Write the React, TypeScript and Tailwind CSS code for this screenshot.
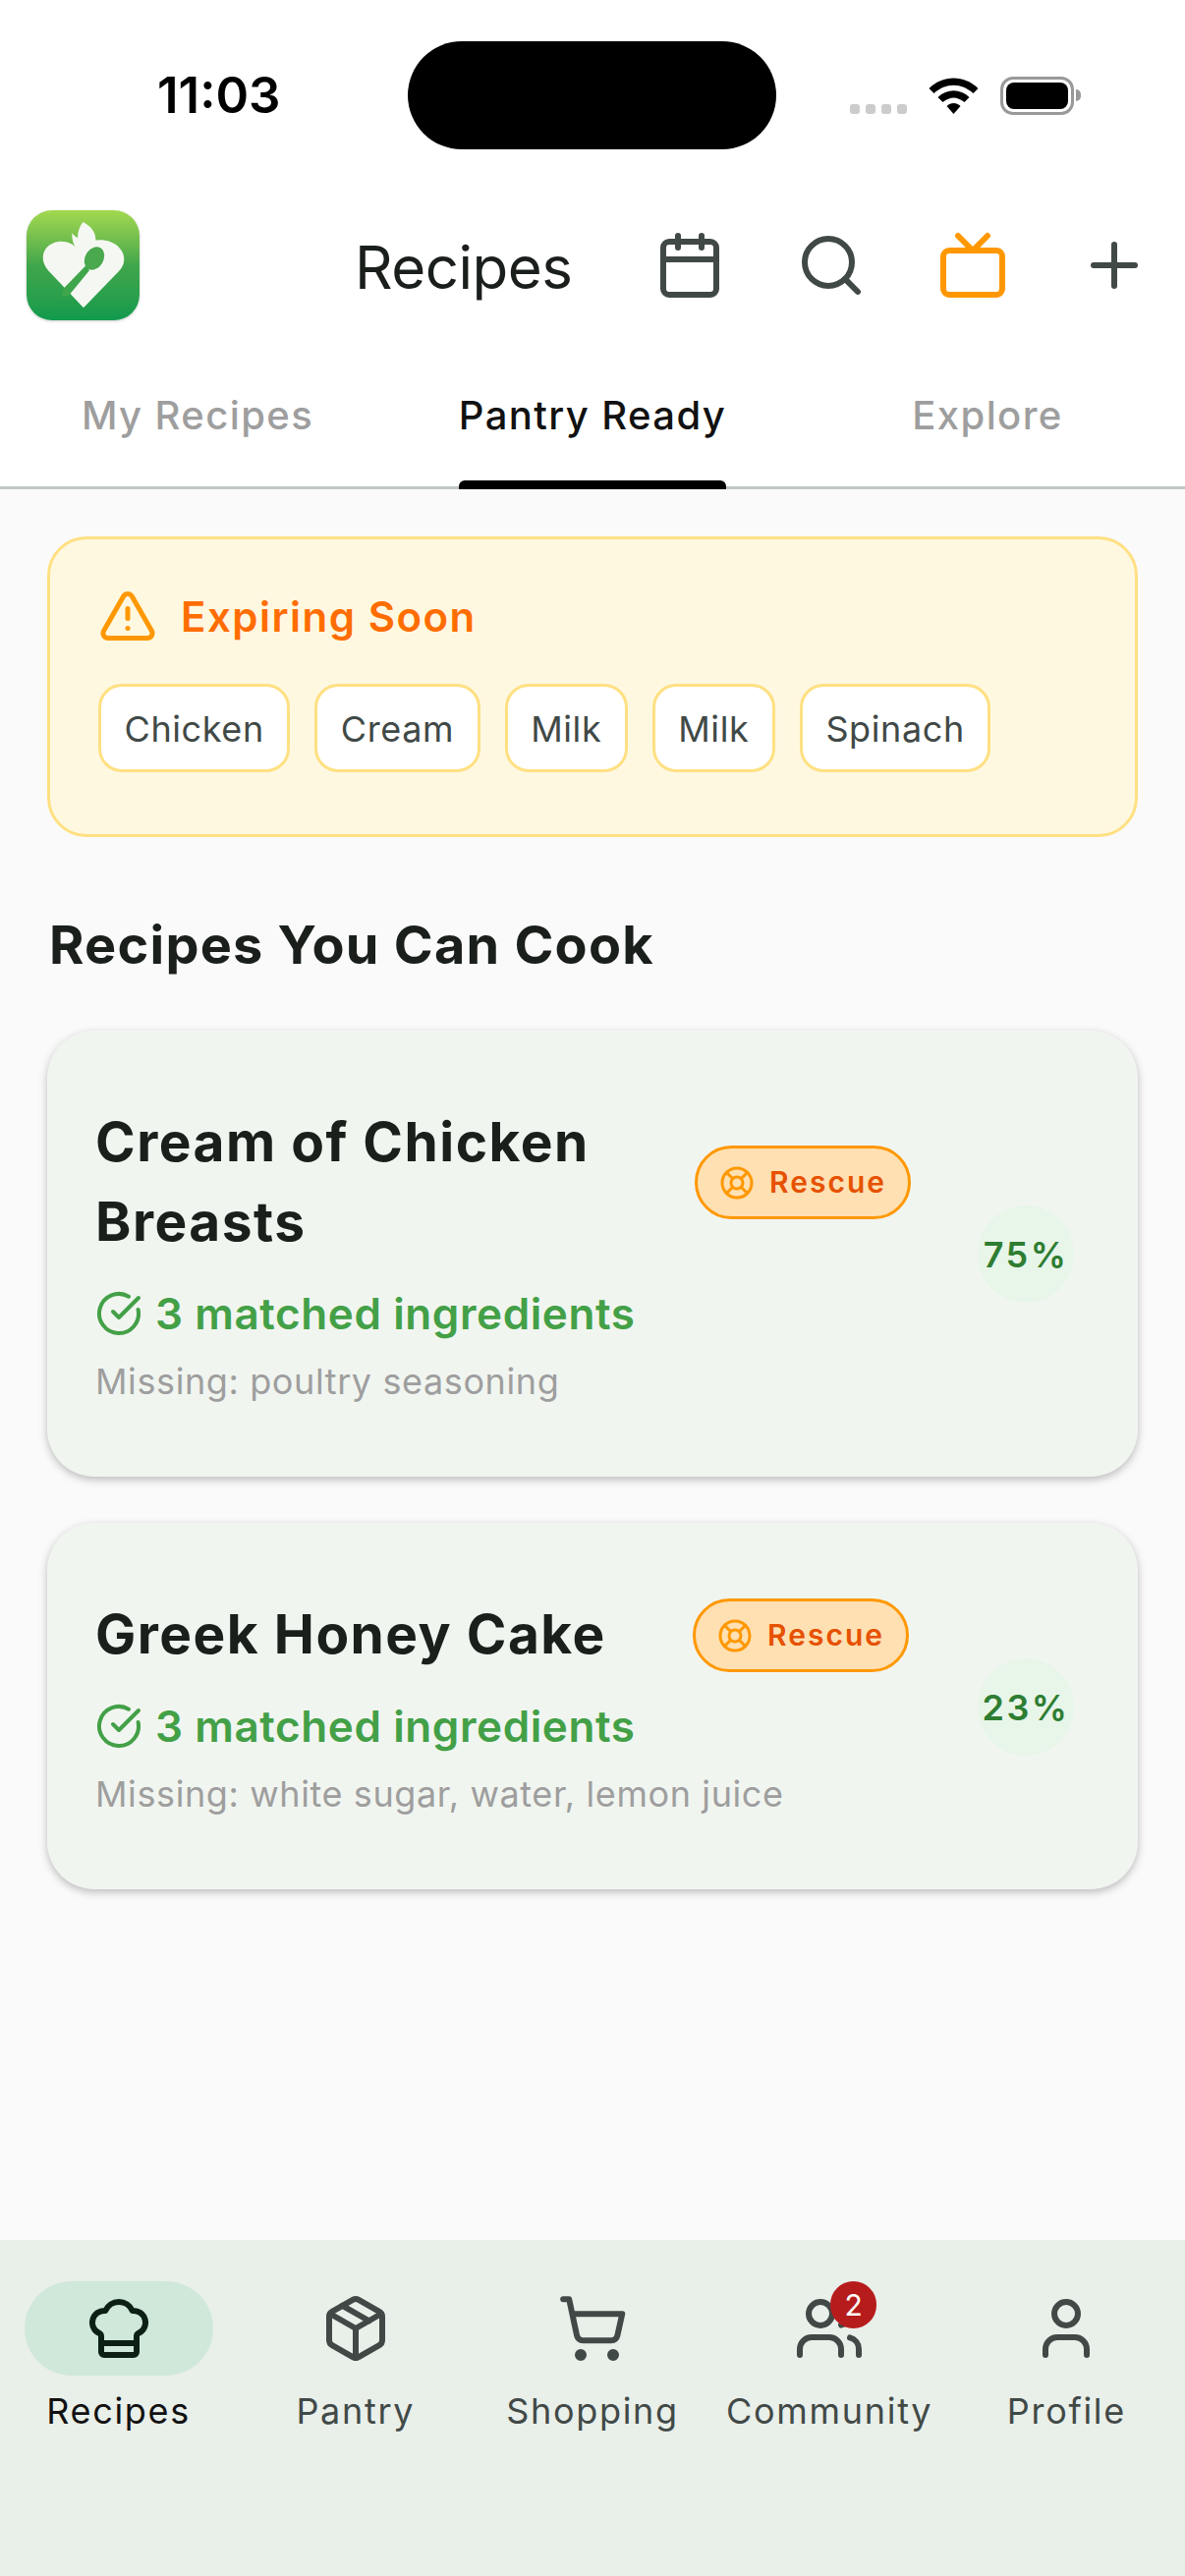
import { Calendar, Search, Tv, Plus, TriangleAlert, LifeBuoy, CircleCheckBig, ChefHat, Package, ShoppingCart, Users, User } from 'lucide-react'

const font = { fontFamily: 'Inter, "Noto Sans", sans-serif' }

const StatusBar = () => (
  <div className="h-[152px] flex items-center relative shrink-0">
    <div className="absolute left-[160px] top-[69px] text-[51px] leading-[56px] font-semibold text-black">11:03</div>
    <div className="absolute left-[415px] top-[42px] w-[375px] h-[110px] rounded-[55px] bg-black" />
    <div className="absolute left-[865px] top-[106px] flex gap-[6px]">
      <div className="w-[10px] h-[10px] rounded-[3px] bg-[#cccccc]" />
      <div className="w-[10px] h-[10px] rounded-[3px] bg-[#cccccc]" />
      <div className="w-[10px] h-[10px] rounded-[3px] bg-[#cccccc]" />
      <div className="w-[10px] h-[10px] rounded-[3px] bg-[#cccccc]" />
    </div>
    <svg className="absolute left-[945px] top-[79px]" width="51" height="38" viewBox="0 0 50 38">
      <path d="M0 11 C14 -3 36 -3 50 11 L45 16 C33 5 17 5 5 16 Z" fill="#000" />
      <path d="M9 20 C18 11 32 11 41 20 L36 25 C28 19 22 19 14 25 Z" fill="#000" />
      <path d="M18 29 C22 25 28 25 32 29 L25 37 Z" fill="#000" />
    </svg>
    <div className="absolute left-[1018px] top-[78px] w-[75px] h-[39px] rounded-[13px] border-[3px] border-[#999999] p-[3px]">
      <div className="w-full h-full rounded-[8px] bg-black" />
    </div>
    <div className="absolute left-[1095px] top-[91px] w-[5px] h-[12px] rounded-r-[5px] bg-[#999999]" />
  </div>
)

// drawn on a 3x grid so the points can be read straight off the crop
const Logo = () => (
  <div className="w-[115px] h-[112px] rounded-[26px] bg-gradient-to-b from-[#a3d94f] via-[#3fa64b] to-[#0f9a4d] shadow-[0_1px_3px_rgba(0,0,0,0.2)]">
    <svg width="115" height="112" viewBox="0 0 345 336">
      <path d="M174 298 L66 184 C36 150 50 104 96 96 C120 92 142 102 154 116 C172 98 200 88 240 92 C292 100 316 152 282 186 Z" fill="#f5f8f2" />
      <path d="M152 116 C142 104 138 88 139 69 C146 78 150 82 156 84 C156 66 162 50 172 36 C196 48 214 68 211 96 L170 116 Z" fill="#f5f8f2" />
      <path d="M108 264 L128 262 L192 184 L182 168 L112 240 Z" fill="#3fa64b" />
      <ellipse cx="207" cy="147" rx="28" ry="37" transform="rotate(30 207 147)" fill="#4aa84e" />
    </svg>
  </div>
)

const Header = () => (
  <div className="flex items-center h-[112px] pl-[27px] mt-[62px] shrink-0">
    <Logo />
    <div className="ml-[219px] text-[60px] leading-[72px] text-[#1a1f1c] tracking-[-0.5px] mt-[4px]">Recipes</div>
    <div className="ml-[84px] flex gap-[72px] text-[#414947]">
      <Calendar size={72} strokeWidth={2} />
      <Search size={72} strokeWidth={2} />
      <Tv className="text-[#ff9800]" size={72} strokeWidth={2} />
      <Plus size={72} strokeWidth={2} />
    </div>
  </div>
)

const Tabs = () => (
  <div className="grid grid-cols-3 h-[134px] mt-[38px] border-b-[3px] border-[#c1c8c2] shrink-0">
    <div className="flex justify-center items-center text-[40px] tracking-[1.4px] font-medium text-[#9e9e9e] pb-[14px]">My Recipes</div>
    <div className="flex justify-center items-center text-[40px] tracking-[1.4px] font-medium text-[#111111] relative pb-[14px]">
      Pantry Ready
      <div className="absolute left-[65px] right-[65px] bottom-[-3px] h-[9px] rounded-t-[6px] bg-black" />
    </div>
    <div className="flex justify-center items-center text-[40px] tracking-[1.4px] font-medium text-[#9e9e9e] pb-[14px]">Explore</div>
  </div>
)

const Chip = ({ name }: { name: string }) => (
  <div className="h-[90px] px-[23.5px] pt-[2px] flex items-center rounded-[24px] border-[3px] border-[#ffe082] bg-white text-[36px] tracking-[0.6px] text-[#414947]">
    {name}
  </div>
)

const Expiring = () => (
  <div className="mx-[48px] mt-[48px] h-[306px] rounded-[40px] border-[3px] border-[#ffe082] bg-[#fff8e1] pt-[48px] pl-[49px]">
    <div className="flex items-center h-[60px]">
      <TriangleAlert className="text-[#ff9800]" size={60} strokeWidth={2} />
      <span className="ml-[24px] text-[42px] tracking-[1.5px] font-semibold text-[#ff6d00]">Expiring Soon</span>
    </div>
    <div className="flex gap-[25px] mt-[39px]">
      {['Chicken', 'Cream', 'Milk', 'Milk', 'Spinach'].map((name, index) => (
        <Chip key={index} name={name} />
      ))}
    </div>
  </div>
)

type RecipeProps = {
  title: string,
  percent: number,
  missing: string,
  height: string,
  badgeClass: string,
  circleClass: string,
}

const RecipeCard = ({ title, percent, missing, height, badgeClass, circleClass }: RecipeProps) => (
  <div className={`mx-[48px] rounded-[48px] bg-[#f1f5f0] shadow-[0_3px_8px_rgba(0,0,0,0.25)] relative pl-[49px] pt-[73px] ${height}`}>
    <div className="w-[560px] text-[55px] leading-[81px] font-bold tracking-[1.5px] text-[#1a1f1c]">{title}</div>
    <div className="flex items-center mt-[23px] h-[60px]">
      <CircleCheckBig className="text-[#43a047]" size={48} strokeWidth={2} />
      <span className="ml-[13px] text-[44px] tracking-[0.6px] font-semibold text-[#43a047]">3 matched ingredients</span>
    </div>
    <div className="mt-[15px] text-[36px] leading-[48px] tracking-[0.6px] text-[#9e9e9e]">Missing: {missing}</div>
    <div className={`absolute flex items-center h-[75px] w-[220px] justify-center rounded-[38px] border-[3px] border-[#ff9800] bg-[#ffe0b2] ${badgeClass}`}>
      <LifeBuoy className="text-[#ff9800]" size={36} strokeWidth={2} />
      <span className="ml-[15px] text-[30px] font-semibold tracking-[2px] text-[#e65100]">Rescue</span>
    </div>
    <div className={`absolute w-[98px] h-[99px] rounded-full bg-[#e8f5e9] flex items-center justify-center text-[36px] font-semibold tracking-[2.5px] text-[#2e7d32] ${circleClass}`}>
      {percent}%
    </div>
  </div>
)

const navItems = [
  { label: 'Recipes', Icon: ChefHat, active: true },
  { label: 'Pantry', Icon: Package },
  { label: 'Shopping', Icon: ShoppingCart },
  { label: 'Community', Icon: Users, badge: 2 },
  { label: 'Profile', Icon: User },
]

const BottomNav = () => (
  <div className="h-[342px] bg-[#e9efe9] grid grid-cols-5 pt-[42px] shrink-0">
    {navItems.map(({ label, Icon, active, badge }) => (
      <div key={label} className="flex flex-col items-center">
        <div className={`w-[192px] h-[96px] rounded-[48px] flex items-center justify-center relative ${active ? 'bg-[#cfe8d9]' : ''}`}>
          <Icon className={active ? 'text-[#0d2016]' : 'text-[#414947]'} size={72} strokeWidth={2} />
          {badge && (
            <div className="absolute left-[97px] top-0 w-[47px] h-[48px] rounded-full bg-[#b71c1c] text-white text-[30px] flex items-center justify-center">
              {badge}
            </div>
          )}
        </div>
        <div className={`mt-[12px] text-[36px] leading-[48px] tracking-[1.7px] ${active ? 'text-[#111111]' : 'text-[#414947]'}`}>{label}</div>
      </div>
    ))}
  </div>
)

const App = () => {
  return (
    <div className="w-[1206px] h-[2622px] bg-white flex flex-col overflow-hidden" style={font}>
      <StatusBar />
      <Header />
      <Tabs />
      <div className="flex-1 bg-[#fafafa]">
        <Expiring />
        <div className="ml-[50px] mt-[78px] text-[54px] leading-[64px] font-bold tracking-[1.25px] text-[#1a1f1c]">Recipes You Can Cook</div>
        <div className="flex flex-col gap-[47px] mt-[55px]">
          <RecipeCard title="Cream of Chicken Breasts" percent={75} missing="poultry seasoning" height="h-[454px]" badgeClass="left-[659px] top-[117px]" circleClass="left-[947px] top-[178px]" />
          <RecipeCard title="Greek Honey Cake" percent={23} missing="white sugar, water, lemon juice" height="h-[373px]" badgeClass="left-[657px] top-[77px]" circleClass="left-[947px] top-[138px]" />
        </div>
      </div>
      <BottomNav />
    </div>
  )
}

export default App
